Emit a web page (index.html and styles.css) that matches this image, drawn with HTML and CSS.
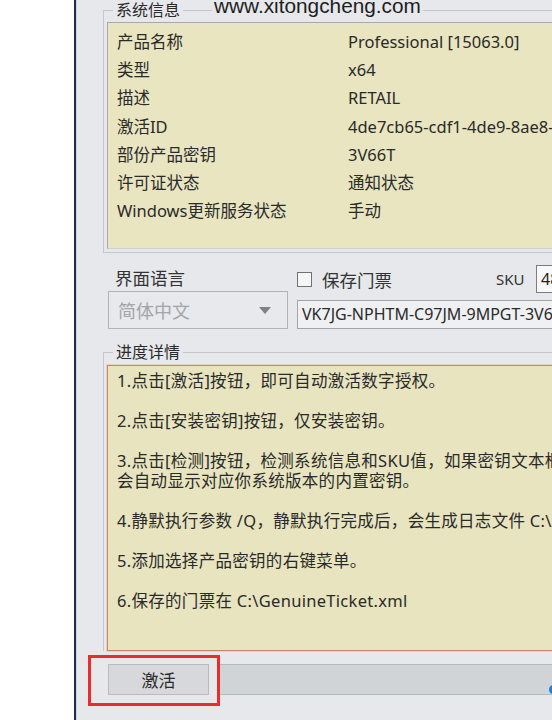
FILE: index.html
```html
<!DOCTYPE html>
<html lang="zh-CN">
<head>
<meta charset="utf-8">
<title>系统信息</title>
<link rel="stylesheet" href="styles.css">
</head>
<body>
<div class="page">
  <div class="outside"></div>
  <div class="window">
    <div class="watermark">www.xitongcheng.com</div>

    <fieldset class="group info-group">
      <legend>系统信息</legend>
      <div class="info-panel">
        <div class="info-grid">
          <span>产品名称</span><span>Professional [15063.0]</span>
          <span>类型</span><span>x64</span>
          <span>描述</span><span>RETAIL</span>
          <span>激活ID</span><span>4de7cb65-cdf1-4de9-8ae8-e3cce27b9f2c</span>
          <span>部份产品密钥</span><span>3V66T</span>
          <span>许可证状态</span><span>通知状态</span>
          <span>Windows更新服务状态</span><span>手动</span>
        </div>
      </div>
    </fieldset>

    <div class="options">
      <div class="col-left">
        <div class="lang-label">界面语言</div>
        <div class="combo"><span class="combo-text">简体中文</span><span class="combo-arrow"></span></div>
      </div>
      <div class="col-right">
        <div class="opt-row">
          <label class="check"><span class="check-box"></span><span>保存门票</span></label>
          <span class="sku-label">SKU</span>
          <span class="sku-box">48</span>
        </div>
        <div class="key-field">VK7JG-NPHTM-C97JM-9MPGT-3V66T</div>
      </div>
    </div>

    <fieldset class="group progress-group">
      <legend>进度详情</legend>
      <div class="progress-panel">
        <p>1.点击[激活]按钮，即可自动激活数字授权。</p>
        <p>2.点击[安装密钥]按钮，仅安装密钥。</p>
        <p>3.点击[检测]按钮，检测系统信息和SKU值，如果密钥文本框为空，<br>会自动显示对应你系统版本的内置密钥。</p>
        <p>4.静默执行参数 /Q，静默执行完成后，会生成日志文件 C:\Activation.log</p>
        <p>5.添加选择产品密钥的右键菜单。</p>
        <p>6.保存的门票在 C:\GenuineTicket.xml</p>
      </div>
    </fieldset>

    <div class="button-row">
      <button class="btn">激活</button>
      <div class="btn-rest"></div>
    </div>

    <div class="highlight"></div>
    <div class="blue-dot"></div>
  </div>
</div>
</body>
</html>
```

FILE: styles.css
```css
html, body {
  margin: 0;
  padding: 0;
  overflow: hidden;
  background: #ffffff;
}

body {
  width: 552px;
  height: 720px;
  font-family: "Noto Sans", "Noto Sans CJK SC", sans-serif;
  font-size: 16.5px;
  color: #2a2a2a;
}

.page {
  display: flex;
  height: 720px;
}

.outside {
  flex: none;
  width: 74px;
  background: #ffffff;
}

.window {
  position: relative;
  flex: none;
  width: 640px;
  height: 720px;
  border-left: 2px solid #1c2e48;
  box-shadow: inset 1px 0 0 #c9d2dc;
  background: #e6e8eb;
}

.watermark {
  position: absolute;
  left: 136px;
  top: -4px;
  padding: 0 2px;
  font-family: "Liberation Sans", Arial, sans-serif;
  font-size: 20.8px;
  line-height: 20px;
  color: #1e1e1e;
  background: #e6e8eb;
}

.group {
  margin: 0 0 0 27px;
  padding: 0 0 3px 3px;
  border: 1px solid #c3c6ca;
  border-right: none;
  min-width: 0;
}

.group legend {
  margin-left: 6px;
  padding: 0 3px;
  font-size: 16px;
  line-height: 20px;
  color: #2a2a2a;
}

.info-panel {
  margin-top: 2px;
  padding: 5px 0 23px 9px;
  border: 1px solid #a7a9ab;
  border-right: none;
  border-bottom-color: #cfd1d3;
  background: #e8e5c0;
}

.info-grid {
  display: grid;
  grid-template-columns: 231px auto;
  grid-auto-rows: 28.2px;
  align-items: center;
  line-height: 20px;
  white-space: nowrap;
}

.options {
  display: flex;
  gap: 9px;
  margin: 12px 0 0 32px;
}

.col-left {
  display: flex;
  flex-direction: column;
  width: 180px;
}

.lang-label {
  height: 26px;
  line-height: 26px;
  padding-left: 7px;
  font-size: 17.5px;
  color: #333;
}

.combo {
  display: flex;
  align-items: center;
  justify-content: space-between;
  height: 38px;
  box-sizing: border-box;
  padding: 0 16px 0 9px;
  border: 1px solid #b1b3b6;
  background: #e7e9ec;
}

.combo-text {
  font-size: 18px;
  color: #a3a5a8;
}

.combo-arrow {
  width: 0;
  height: 0;
  border-left: 6px solid transparent;
  border-right: 6px solid transparent;
  border-top: 7px solid #7f8184;
}

.col-right {
  display: flex;
  flex-direction: column;
  gap: 7px;
  width: 340px;
}

.opt-row {
  display: flex;
  align-items: center;
  height: 28px;
}

.check {
  display: flex;
  align-items: center;
  gap: 10px;
  width: 199px;
  font-size: 17.5px;
  color: #333;
}

.check-box {
  width: 15px;
  height: 15px;
  box-sizing: border-box;
  border: 1px solid #6f7174;
  background: #f6f6f6;
}

.sku-label {
  width: 40px;
  font-size: 15px;
  color: #333;
}

.sku-box {
  display: flex;
  align-items: center;
  height: 28px;
  width: 80px;
  box-sizing: border-box;
  padding-left: 4px;
  border: 1px solid #7b7d80;
  background: #f8f8f8;
  font-size: 16px;
  color: #222;
}

.key-field {
  height: 29px;
  box-sizing: border-box;
  line-height: 27px;
  padding-left: 4px;
  border: 1px solid #a2a4a7;
  background: #eef0f2;
  font-size: 16px;
  color: #2a2a2a;
  white-space: nowrap;
}

.progress-group {
  margin-top: 13px;
  padding-bottom: 0;
  border-bottom: none;
}

.progress-panel {
  margin-top: 3px;
  height: 286px;
  box-sizing: border-box;
  padding: 5px 0 0 9px;
  border: 1px solid #c9856a;
  border-right: none;
  box-shadow: 0 0 0 1px #ead0c4;
  background: #e7e4bf;
  line-height: 20px;
  letter-spacing: 0.3px;
  white-space: nowrap;
}

.progress-panel p {
  margin: 0 0 20px;
}

.button-row {
  display: flex;
  gap: 10px;
  margin: 13px 0 0 32px;
}

.btn {
  flex: none;
  width: 101px;
  height: 31px;
  padding: 0;
  font-family: inherit;
  font-size: 17px;
  color: #2a2a2a;
  border: 1px solid #b9bbbe;
  background: #d6d8db;
}

.btn-rest {
  flex: 1;
  height: 31px;
  box-sizing: border-box;
  border: 1px solid #b6b9bc;
  border-right: none;
  background: #d1d4d7;
}

.highlight {
  position: absolute;
  left: 12px;
  top: 655px;
  width: 132px;
  height: 51px;
  box-sizing: border-box;
  border: 3px solid #ea2c2f;
}

.blue-dot {
  position: absolute;
  left: 473px;
  top: 685px;
  width: 8px;
  height: 9px;
  border-radius: 50%;
  background: #1f7fd6;
}
```
